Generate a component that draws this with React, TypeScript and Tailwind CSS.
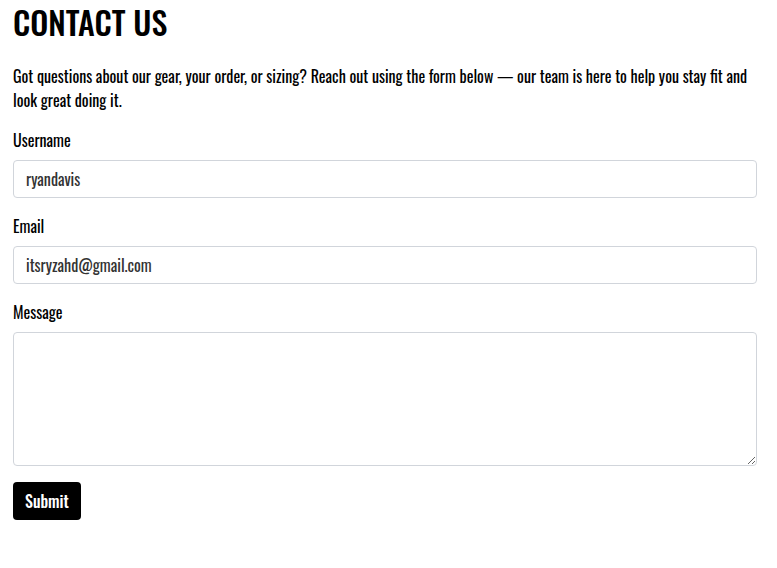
export default function App() {
  return (
    <div className="bg-white text-black font-['Oswald',sans-serif] pl-[13px] pr-5">
      <h1 className="text-[32px] leading-[44px] font-[550] uppercase">Contact Us</h1>
      <p className="mt-[20px] text-base leading-6">
        Got questions about our gear, your order, or sizing? Reach out using the form below — our team is here to help you stay fit and look great doing it.
      </p>

      <form className="mt-4 flex flex-col">
        <label className="text-base leading-6">Username</label>
        <input
          type="text"
          defaultValue="ryandavis"
          className="mt-2 h-[38px] w-full rounded border border-[#d1d5db] px-3 text-base text-[#333] outline-none"
        />

        <label className="mt-4 text-base leading-6">Email</label>
        <input
          type="email"
          defaultValue="itsryzahd@gmail.com"
          className="mt-2 h-[38px] w-full rounded border border-[#d1d5db] px-3 text-base text-[#333] outline-none"
        />

        <label className="mt-4 text-base leading-6">Message</label>
        <textarea className="mt-2 h-[134px] w-full rounded border border-[#d1d5db] px-3 py-2 text-base outline-none" />

        <div className="mt-4">
          <button type="button" className="h-[38px] rounded bg-black px-3 text-base font-medium text-white">
            Submit
          </button>
        </div>
      </form>
    </div>
  )
}
